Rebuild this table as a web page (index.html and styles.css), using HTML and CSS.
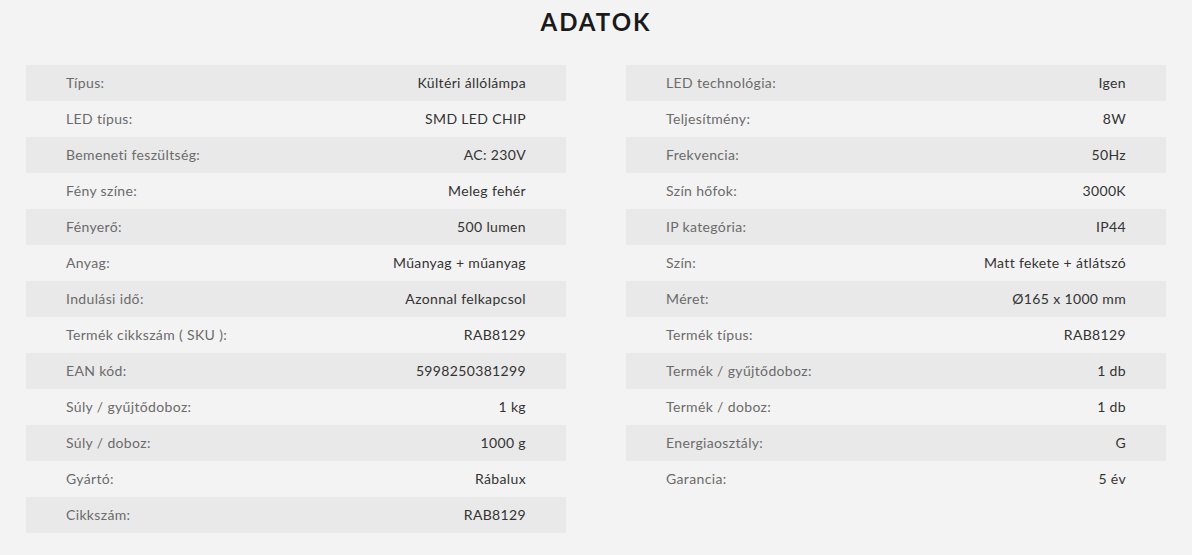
FILE: index.html
```html
<!DOCTYPE html>
<html lang="hu">
<head>
<meta charset="utf-8">
<title>Adatok</title>
<link rel="stylesheet" href="styles.css">
</head>
<body>
<h1 class="title">ADATOK</h1>
<div class="tables">
  <div class="table">
    <div class="row"><span class="label">Típus:</span><span class="value">Kültéri állólámpa</span></div>
    <div class="row"><span class="label">LED típus:</span><span class="value">SMD LED CHIP</span></div>
    <div class="row"><span class="label">Bemeneti feszültség:</span><span class="value">AC: 230V</span></div>
    <div class="row"><span class="label">Fény színe:</span><span class="value">Meleg fehér</span></div>
    <div class="row"><span class="label">Fényerő:</span><span class="value">500 lumen</span></div>
    <div class="row"><span class="label">Anyag:</span><span class="value">Műanyag + műanyag</span></div>
    <div class="row"><span class="label">Indulási idő:</span><span class="value">Azonnal felkapcsol</span></div>
    <div class="row"><span class="label">Termék cikkszám ( SKU ):</span><span class="value">RAB8129</span></div>
    <div class="row"><span class="label">EAN kód:</span><span class="value">5998250381299</span></div>
    <div class="row"><span class="label">Súly / gyűjtődoboz:</span><span class="value">1 kg</span></div>
    <div class="row"><span class="label">Súly / doboz:</span><span class="value">1000 g</span></div>
    <div class="row"><span class="label">Gyártó:</span><span class="value">Rábalux</span></div>
    <div class="row"><span class="label">Cikkszám:</span><span class="value">RAB8129</span></div>
  </div>
  <div class="table">
    <div class="row"><span class="label">LED technológia:</span><span class="value">Igen</span></div>
    <div class="row"><span class="label">Teljesítmény:</span><span class="value">8W</span></div>
    <div class="row"><span class="label">Frekvencia:</span><span class="value">50Hz</span></div>
    <div class="row"><span class="label">Szín hőfok:</span><span class="value">3000K</span></div>
    <div class="row"><span class="label">IP kategória:</span><span class="value">IP44</span></div>
    <div class="row"><span class="label">Szín:</span><span class="value">Matt fekete + átlátszó</span></div>
    <div class="row"><span class="label">Méret:</span><span class="value">Ø165 x 1000 mm</span></div>
    <div class="row"><span class="label">Termék típus:</span><span class="value">RAB8129</span></div>
    <div class="row"><span class="label">Termék / gyűjtődoboz:</span><span class="value">1 db</span></div>
    <div class="row"><span class="label">Termék / doboz:</span><span class="value">1 db</span></div>
    <div class="row"><span class="label">Energiaosztály:</span><span class="value">G</span></div>
    <div class="row"><span class="label">Garancia:</span><span class="value">5 év</span></div>
  </div>
</div>
</body>
</html>
```
FILE: styles.css
```css
html, body {
  margin: 0;
  padding: 0;
  background: #f3f3f3;
}
body {
  font-family: "Lato", "Noto Sans", sans-serif;
  color: #333;
}
.title {
  margin: 0 0 21px;
  line-height: 44px;
  font-size: 24px;
  font-weight: 700;
  letter-spacing: 2px;
  text-align: center;
  color: #1a1a1a;
}
.tables {
  display: grid;
  grid-template-columns: 540px 540px;
  column-gap: 60px;
  padding: 0 26px;
  align-items: start;
}
.row {
  display: flex;
  justify-content: space-between;
  align-items: center;
  box-sizing: border-box;
  height: 36px;
  padding: 0 40px 2px;
  font-size: 14px;
  letter-spacing: 0.35px;
}
.row:nth-child(odd) {
  background: #e9e9e9;
}
.label {
  color: #6b6b6b;
}
.value {
  color: #333;
}
```
